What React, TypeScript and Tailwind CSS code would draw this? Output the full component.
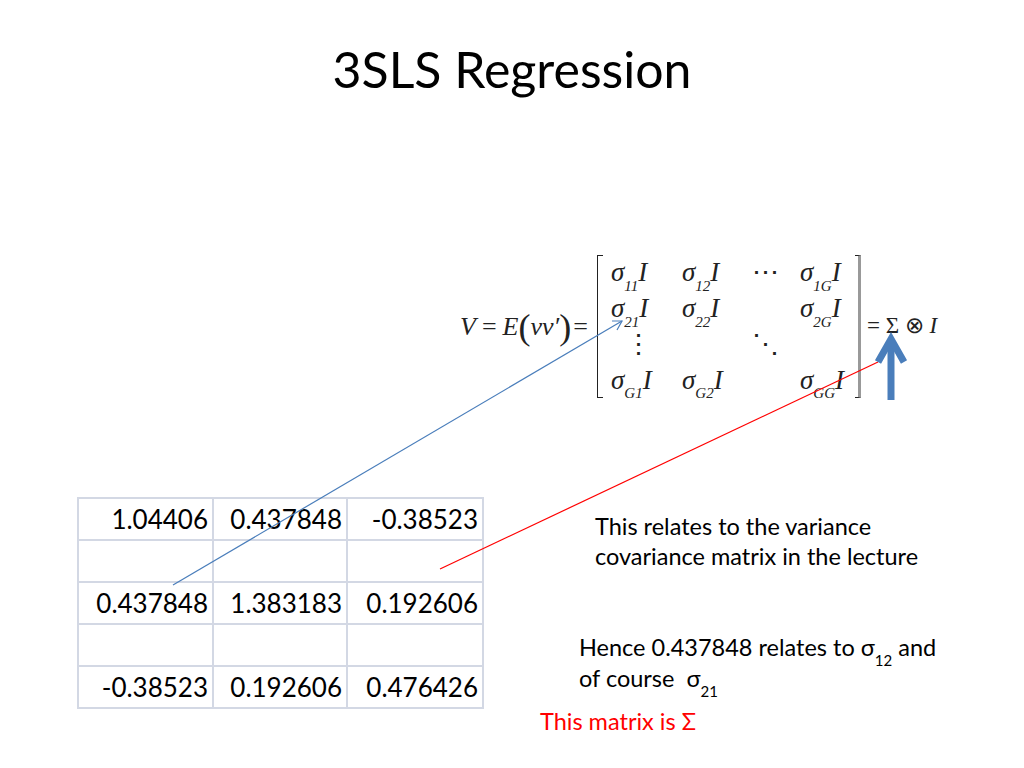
const serif = "font-['Liberation_Serif',serif]";

const rows = [
  ["1.04406", "0.437848", "-0.38523"],
  ["", "", ""],
  ["0.437848", "1.383183", "0.192606"],
  ["", "", ""],
  ["-0.38523", "0.192606", "0.476426"],
];

const Sig = ({ sub }: { sub: string }) => (
  <span className="whitespace-nowrap">
    <i>σ</i>
    <sub className="text-[15px] italic align-[-6px]">{sub}</sub>
    <i>I</i>
  </span>
);

const matrix: (string | null)[][] = [
  ["11", "12", "cdots", "1G"],
  ["21", "22", null, "2G"],
  ["vdots", null, "ddots", null],
  ["G1", "G2", null, "GG"],
];

function Cell({ v }: { v: string | null }) {
  if (v === null) return <div />;
  if (v === "cdots") return <div className="pl-[2px]">⋯</div>;
  if (v === "vdots") return <div className="pl-[14px]">⋮</div>;
  if (v === "ddots") return <div className="pl-[2px]">⋱</div>;
  return (
    <div>
      <Sig sub={v} />
    </div>
  );
}

function Formula() {
  return (
    <div className={`flex items-center ml-[460px] text-[#222] ${serif}`}>
      <span className="w-[137px] whitespace-nowrap flex items-center text-[26px]">
        <i>V</i>
        <span className="mx-[6px]">=</span>
        <i>E</i>
        <span className="text-[36px] leading-none">(</span>
        <i>vv′</i>
        <span className="text-[36px] leading-none">)</span>
        <span className="ml-[2px]">=</span>
      </span>
      <div className="flex">
        <div className="w-[6px] h-[143px] border-l-[1.5px] border-y-[1.5px] border-[#222]" />
        <div className="w-[252px] grid grid-cols-[71px_68px_50px_63px] grid-rows-4 h-[143px] items-center pl-[8px] leading-none text-[27px]">
          {matrix.flat().map((v, i) => (
            <Cell key={i} v={v} />
          ))}
        </div>
        <div className="w-[6px] h-[143px] border-r-[3px] border-y-[1.5px] border-[#999] border-y-[#222]" />
      </div>
      <span className="ml-[6px] whitespace-nowrap text-[23px]">
        = Σ ⊗ <i>I</i>
      </span>
    </div>
  );
}

function Overlay() {
  return (
    <svg className="absolute inset-0 pointer-events-none" width="1024" height="768" viewBox="0 0 1024 768">
      <line x1="173" y1="585" x2="622" y2="321" stroke="#4a7ebb" strokeWidth="1.2" />
      <polyline points="612,321 622,321 617,330" fill="none" stroke="#4a7ebb" strokeWidth="1.2" />
      <line x1="440" y1="569" x2="878" y2="362" stroke="#ff0000" strokeWidth="1.2" />
      <line x1="891" y1="400" x2="891" y2="345" stroke="#4a7ebb" strokeWidth="7" />
      <polyline points="878,362 891,339 904,362" fill="none" stroke="#4a7ebb" strokeWidth="7" strokeLinejoin="miter" />
    </svg>
  );
}

export default function App() {
  return (
    <div className="relative w-[1024px] h-[768px] bg-white overflow-hidden font-['Lato',sans-serif] text-black">
      <h1 className="h-[120px] pt-[39px] text-center text-[50px] leading-[60px]">3SLS Regression</h1>
      <div className="mt-[135px]">
        <Formula />
      </div>
      <div className="flex items-start mt-[99px]">
        <table className="ml-[77px] border-collapse text-[26px]">
          <tbody>
            {rows.map((r, i) => (
              <tr key={i} className="h-[42px]">
                {r.map((c, j) => (
                  <td
                    key={j}
                    className={`border-2 border-[#d3d8e4] p-0 pr-[4px] text-right leading-none ${
                      j === 0 ? "w-[135px]" : j === 1 ? "w-[134px]" : "w-[136px]"
                    }`}
                  >
                    {c}
                  </td>
                ))}
              </tr>
            ))}
          </tbody>
        </table>
        <div className="ml-[56px] flex flex-col text-[23.5px] leading-[30px]">
          <p className="mt-[14px] pl-[55px]">
            This relates to the variance
            <br />
            covariance matrix in the lecture
          </p>
          <p className="mt-[61px] pl-[39px] leading-[31px]">
            Hence 0.437848 relates to σ<sub className="text-[15px] align-[-6px]">12</sub> and
            <br />
            of course&nbsp; σ<sub className="text-[15px] align-[-6px]">21</sub>
          </p>
          <p className="mt-[12px] text-[#ff0000]">This matrix is Σ</p>
        </div>
      </div>
      <Overlay />
    </div>
  );
}
